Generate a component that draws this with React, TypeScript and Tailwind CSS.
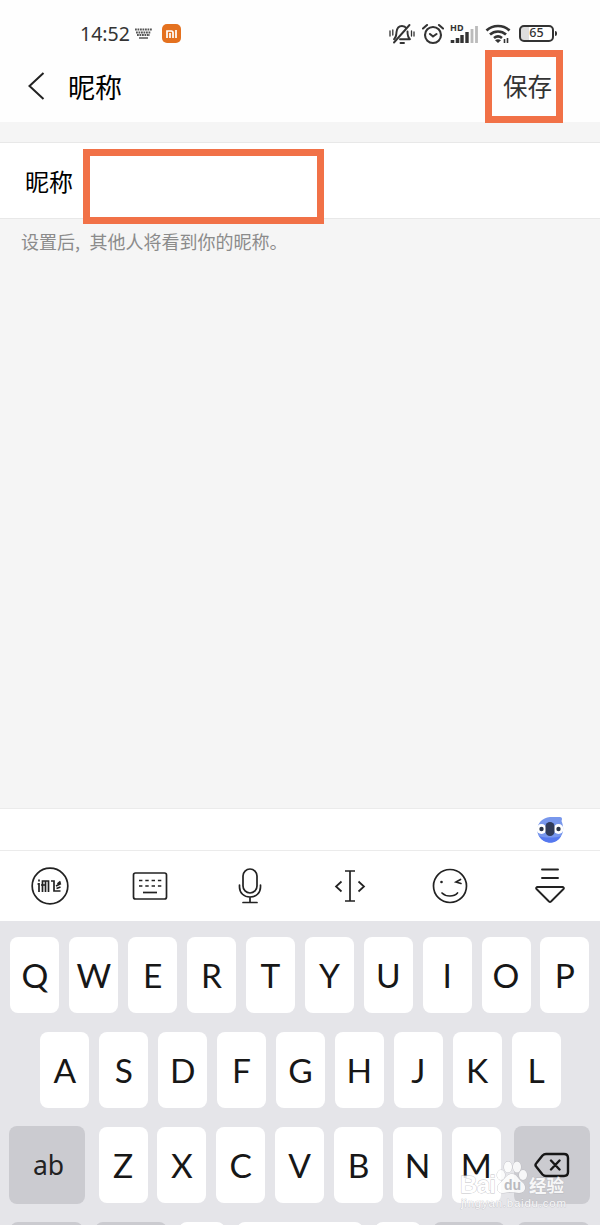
import { ReactNode } from "react";

const rowOne = ["Q", "W", "E", "R", "T", "Y", "U", "I", "O", "P"];
const rowTwo = ["A", "S", "D", "F", "G", "H", "J", "K", "L"];
const rowThree = ["Z", "X", "C", "V", "B", "N", "M"];

const Key = ({ children }: { children: ReactNode }) => (
  <div className="flex h-[76px] w-[49px] shrink-0 items-center justify-center rounded-lg bg-white pt-px font-[Lato,sans-serif] text-[33.5px] leading-none text-[#171717]">
    {children}
  </div>
);

const StatusBar = () => (
  <div className="flex h-[50px] items-center pt-[17px] pl-[80px] text-[#333]">
    <span className="w-[55px] pt-px font-['Noto_Sans',sans-serif] text-[19.5px] leading-none">14:52</span>
    <svg width="17" height="11" viewBox="0 0 17 11" fill="none" stroke="#555">
      <path d="M0 1.5h17M1 4.5h15M2 7h13" strokeWidth="2" strokeDasharray="1.8 0.7" />
      <path d="M4 10h9" strokeWidth="1.5" />
    </svg>
    <div className="ml-[10px] flex h-[19px] w-[19px] items-center justify-center rounded-[5px] bg-[#e4711f]">
      <svg width="11" height="8" viewBox="0 0 11 8" fill="none" stroke="#fff" strokeWidth="1.7">
        <path d="M1 8V1h4.3q1.7 0 1.7 1.7V8M4 3v5M10 0v8" />
      </svg>
    </div>
    <div className="ml-[208px] flex items-center">
      <svg width="26" height="22" viewBox="0 0 26 22" fill="none" stroke="#333" strokeWidth="1.9" strokeLinecap="round" strokeLinejoin="round">
        <path d="M5 16.2c2.4-1.8 2.2-4 2.5-7C7.9 5.3 9.5 3 13 3c2 0 3.5.8 4.4 2.2M18.5 8.5c0 3.8.5 6 2.5 7.7H11M5 19.5L20.5 2M11.5 20h3.5" />
        <path d="M1 8v5M3.8 7v5M22.5 8v5M25 9v4" strokeWidth="1.3" />
      </svg>
      <svg className="ml-[7px]" width="22" height="22" viewBox="0 0 22 22" fill="none" stroke="#333" strokeWidth="2.1" strokeLinecap="round">
        <circle cx="11" cy="12" r="8" />
        <path d="M1 5.5L5 2M17 2l4 3.5M8 11l3 2.5 3.5-2.5" />
      </svg>
      <svg className="ml-[6px] overflow-visible" width="29" height="22" viewBox="0 0 29 22">
        <text x="0" y="8" fontSize="9" fontWeight="700" fontFamily="Noto Sans" fill="#333">HD</text>
        <path d="M2.5 17v3M7.5 15v5" stroke="#333" strokeWidth="3.6" />
        <path d="M12 12V20M17 9V20" stroke="#333" strokeWidth="3.4" />
        <path d="M22 6V20M26.500 3V20" stroke="#bbb" strokeWidth="2.8" />
      </svg>
      <svg className="ml-[6px]" width="26" height="22" viewBox="0 0 26 22" fill="none" stroke="#333" strokeWidth="2.7">
        <path d="M1.5 7.5c6.5-6 16.5-6 23 0M5 11.5c4.5-4 11.500-4 16 0M9 15c2.5-2 5.5-2 8 0" />
        <path d="M10 17.3q3-2 6 0L13 20z" fill="#333" stroke="none" />
        <path d="M19.500 16v4M22.500 15v5" strokeWidth="1.6" />
      </svg>
      <div className="ml-[8px] flex items-center">
        <div className="flex h-[17px] w-[35px] items-center justify-center rounded-[5px] border-2 border-[#333] bg-[linear-gradient(90deg,#ddd_25%,#fff_25%)] font-['Noto_Sans',sans-serif] text-[12.5px] leading-none font-medium">
          65
        </div>
        <div className="ml-px h-[5px] w-[2px] rounded-r bg-[#333]" />
      </div>
    </div>
  </div>
);

const Toolbar = () => (
  <div className="grid h-[70px] grid-cols-6 items-center justify-items-center bg-white pb-px">
    <svg width="38" height="38" viewBox="0 0 38 38" fill="none" stroke="#222" strokeWidth="1.7">
      <circle cx="19" cy="19" r="17.8" />
      <path d="M8 16v9M6.5 17h2M8 12.5v2M11.5 25V14h3.5M10 18h4.5M14.5 25V14h3v11M20 14h3v10h6.5M25 19l5-2.5M25.5 21.5l4-1.500M26.5 17l3-2.500" />
    </svg>
    <svg width="36" height="30" viewBox="0 0 36 30" fill="none" stroke="#222" strokeWidth="1.7">
      <rect x="1.5" y="2" width="33" height="26" rx="2" />
      <path d="M7 9.500h23M7 15h23" strokeDasharray="3.4 2.9" />
      <path d="M11 21.500h14" />
    </svg>
    <svg width="24" height="38" viewBox="0 0 24 38" fill="none" stroke="#222" strokeWidth="1.7" strokeLinecap="round">
      <rect x="5" y="2" width="14" height="24" rx="7" />
      <path d="M1.5 18v2c0 6 4.5 10 10.500 10s10.500-4 10.500-10v-2M12 30v5M5 35.500h14" />
    </svg>
    <svg width="32" height="34" viewBox="0 0 32 34" fill="none" stroke="#222" strokeWidth="1.7">
      <path d="M16 2v30M11 2h10M11 32h10M7.5 12.500L2 17.500l5.500 5M24.500 12.500l5.500 5-5.500 5" />
    </svg>
    <svg width="36" height="36" viewBox="0 0 36 36" fill="none" stroke="#222" strokeWidth="1.7" strokeLinecap="round">
      <circle cx="18" cy="18" r="16.5" />
      <path d="M10 25c4 4 12 4 15.500 0M28.500 11.500l-4.500 2.500 5 1.500" />
      <circle cx="9.500" cy="14" r="1.300" fill="#222" stroke="none" />
    </svg>
    <svg width="32" height="38" viewBox="0 0 32 38" fill="none" stroke="#222" strokeWidth="1.9" strokeLinecap="round" strokeLinejoin="round">
      <path d="M8 2.500h16M8 11h16M3 20h26q1.500 1 .5 2L17 34.500q-1 .8-2 0L2.500 22q-1-1 .5-2z" />
    </svg>
  </div>
);

const Watermark = () => (
  <div className="absolute top-[1158px] left-[458px] h-[54px] w-[116px]">
    <svg width="116" height="54" viewBox="0 0 116 54" fill="#fff" opacity="0.85">
      <g stroke="#b8b8bd" strokeWidth="0.8" paintOrder="stroke">
        <text x="2" y="35" fontFamily="Liberation Sans" fontWeight="700" fontSize="24" textLength="36">Bai</text>
        <ellipse cx="43" cy="17" rx="4" ry="5" />
        <ellipse cx="50" cy="9" rx="4" ry="5.5" />
        <ellipse cx="59" cy="9" rx="4" ry="5.5" />
        <ellipse cx="65" cy="17" rx="4" ry="5" />
        <path d="M54 16c5 0 6 5 10 8 5 4 4 11-3 11-3 0-5-1-8-1s-5 1-8 1c-7 0-7-7-2-11 4-3 6-8 11-8z" />
        <text x="71" y="34" fontFamily="Noto Sans CJK SC" fontWeight="700" fontSize="17.5">经验</text>
      </g>
      <text x="46" y="32" fontFamily="Liberation Sans" fontWeight="700" fontSize="14" fill="#b5b5ba">du</text>
      <text x="3" y="49" fontFamily="Liberation Sans" fontSize="11.5" textLength="105" stroke="#b8b8bd" strokeWidth="0.7" paintOrder="stroke">jingyan.baidu.com</text>
    </svg>
  </div>
);

const App = () => {
  return (
    <div className="relative flex h-[1225px] w-[600px] flex-col overflow-hidden bg-[#f5f5f5] font-['Noto_Sans_CJK_SC',sans-serif]">
      <header className="h-[122px] bg-[#fefefe]">
        <StatusBar />
        <div className="flex h-[72px] items-center pr-[48px] pl-[27px] text-black">
          <svg width="18" height="28" viewBox="0 0 18 28" fill="none" stroke="#222" strokeWidth="2">
            <path d="M16.5 1L2.5 14l14 13" />
          </svg>
          <h1 className="ml-[23px] text-[27px] leading-none">昵称</h1>
          <span className="ml-auto text-[24.5px] leading-none text-[#333]">保存</span>
        </div>
      </header>

      <div className="mt-[20px] flex h-[77px] items-center border-y border-[#e8e8e8] bg-white pl-[25px] text-[24px] leading-none text-black">
        昵称
      </div>
      <p className="flex pt-[13px] pl-[21px] text-[18px] leading-none text-[#8b8b8b]">
        设置后<span className="w-[14.5px]">,</span>其他人将看到你的昵称。
      </p>

      <div className="mt-auto flex h-[43px] items-center justify-end border-y border-[#ebebeb] bg-white pr-[35px]">
        <svg width="30" height="28" viewBox="0 0 30 28">
          <path d="M15 1h10q3 0 1.500 4c3 7 2 14-3 18-6 5-15 4-19-2C-1 13 4 2 15 1z" fill="#7897ec" />
          <path d="M4 20c5 2 17 2 22 0-4 9-17 9-22 0z" fill="#5578ef" />
          <circle cx="6.5" cy="13" r="5" fill="#fff" />
          <circle cx="23.5" cy="13" r="5" fill="#fff" />
          <circle cx="6.5" cy="13" r="2.2" fill="#293448" />
          <circle cx="23.5" cy="13" r="2.2" fill="#293448" />
          <rect x="10.5" y="6" width="9" height="14" rx="4.5" fill="#303b59" />
        </svg>
      </div>
      <Toolbar />

      <div className="flex h-[304px] shrink-0 flex-col gap-[19px] bg-[#e5e5e9] pt-[16px]">
        <div className="flex gap-[9.9px] pl-[10.4px]">
          {rowOne.map((letter) => (
            <Key key={letter}>{letter}</Key>
          ))}
        </div>
        <div className="flex gap-[9.9px] pl-[40.4px]">
          {rowTwo.map((letter) => (
            <Key key={letter}>{letter}</Key>
          ))}
        </div>
        <div className="flex h-[76px] items-center">
          <div className="ml-[9px] flex h-[78px] w-[76px] items-center justify-center rounded-lg bg-[#cbcbd0] pl-[3px] font-['Noto_Sans',sans-serif] text-[26.5px] leading-none text-[#222]">
            ab
          </div>
          <div className="ml-[13.5px] flex gap-[9.9px]">
            {rowThree.map((letter) => (
              <Key key={letter}>{letter}</Key>
            ))}
          </div>
          <div className="ml-[13px] flex h-[78px] w-[76px] items-center justify-center rounded-lg bg-[#cbcbd0]">
            <svg width="36" height="26" viewBox="0 0 36 26" fill="none" stroke="#171717" strokeWidth="2.4" strokeLinecap="round" strokeLinejoin="round">
              <path d="M12 2h18q4 0 4 4v14q0 4-4 4H12q-2 0-3.500-1.500L2.500 15q-2-2 0-4l6-7.500Q10 2 12 2zM17 8.500l8.500 9M25.500 8.500l-8.500 9" />
            </svg>
          </div>
        </div>
        <div className="flex h-[76px] shrink-0 gap-[12px] pl-[10px]">
          <div className="w-[73px] rounded-lg bg-[#cbcbd0]" />
          <div className="w-[72px] rounded-lg bg-[#cbcbd0]" />
          <div className="w-[46px] rounded-lg bg-white" />
          <div className="w-[126px] rounded-lg bg-white" />
          <div className="w-[46px] rounded-lg bg-white" />
          <div className="w-[72px] rounded-lg bg-[#cbcbd0]" />
          <div className="w-[73px] rounded-lg bg-[#cbcbd0]" />
        </div>
      </div>

      {/* highlight frames */}
      <div className="absolute top-[50px] left-[485px] h-[73px] w-[78px] border-[7px] border-[#f17147]" />
      <div className="absolute top-[149px] left-[83px] h-[75px] w-[241px] border-[7px] border-[#f17147]" />
      <Watermark />
    </div>
  );
};

export default App;
